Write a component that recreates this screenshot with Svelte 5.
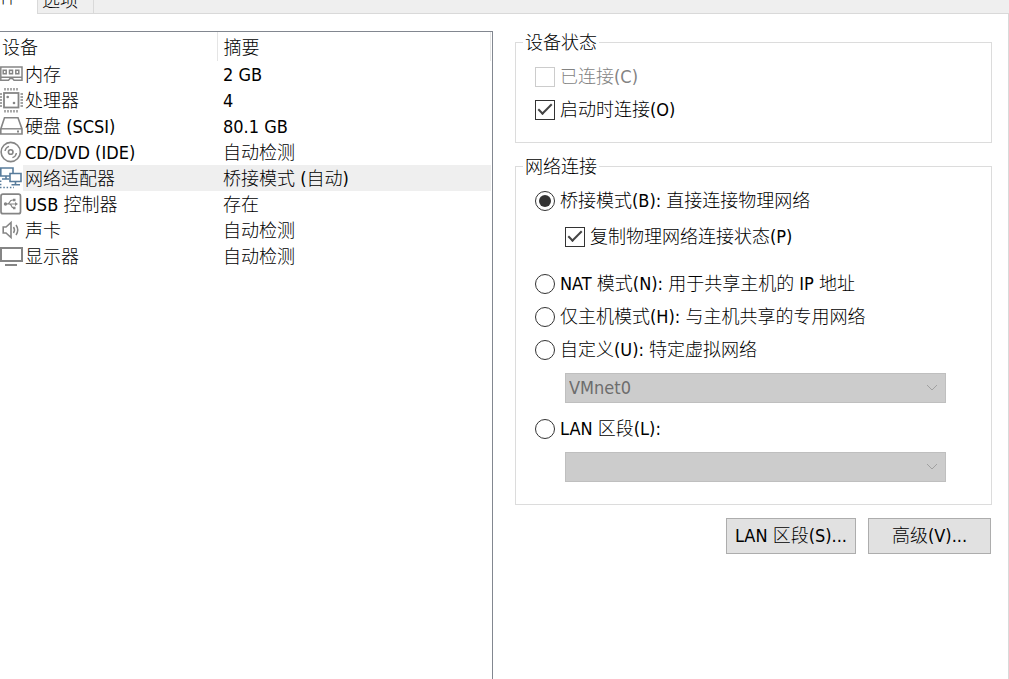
<script>
  let devices = [
    { icon: 'memory', name: '内存', summary: '2 GB' },
    { icon: 'cpu', name: '处理器', summary: '4' },
    { icon: 'disk', name: '硬盘 (SCSI)', summary: '80.1 GB' },
    { icon: 'cd', name: 'CD/DVD (IDE)', summary: '自动检测' },
    { icon: 'network', name: '网络适配器', summary: '桥接模式 (自动)' },
    { icon: 'usb', name: 'USB 控制器', summary: '存在' },
    { icon: 'sound', name: '声卡', summary: '自动检测' },
    { icon: 'display', name: '显示器', summary: '自动检测' }
  ];

  let selected = 'network';
  let connected = false;
  let connectAtPowerOn = true;
  let mode = 'bridged';
  let replicate = true;
</script>

<div class="dialog">
  <nav class="tabs">
    <button class="tab active">硬件</button>
    <button class="tab">选项</button>
  </nav>

  <main>
    <section class="device-list">
      <table>
        <colgroup>
          <col class="col-icon" />
          <col class="col-name" />
          <col />
        </colgroup>
        <thead>
          <tr>
            <th class="name" colspan="2">设备</th>
            <th>摘要</th>
          </tr>
        </thead>
        <tbody>
          {#each devices as device}
            <tr class:selected={device.icon === selected} on:click={() => (selected = device.icon)}>
              <td class="icon">
                <svg width="23" height="26" viewBox="0 0 23 26" fill="none" stroke="#858585" stroke-width="2">
                  {#if device.icon === 'memory'}
                    <path d="M0.8 6H22V19.2H14L12.5 17.5H10L8.5 19.2H0.8ZM1 16.3H22" stroke-width="1.5" />
                    <path d="M3.2 9.3H6.2V12.8H3.2ZM9.5 9.3H12.5V12.8H9.5ZM15.8 9.3H18.8V12.8H15.8Z" stroke-width="1.5" />
                  {:else if device.icon === 'cpu'}
                    <rect x="4" y="6" width="14.5" height="14.5" stroke-width="1.8" />
                    <path d="M5 1V3.5M8 1V3.5M11 1V3.5M14 1V3.5M17 1V3.5M5 23V25.5M8 23V25.5M11 23V25.5M14 23V25.5M17 23V25.5" stroke-width="1.4" />
                    <path d="M0 7H2M0 10H2M0 13H2M0 16H2M0 19H2M20.5 7H23M20.5 10H23M20.5 13H23M20.5 16H23M20.5 19H23" stroke-width="1.4" />
                    <g fill="#858585" stroke="none">
                      <circle cx="7.7" cy="10" r="1.3" />
                      <circle cx="14" cy="16" r="1.3" />
                    </g>
                  {:else if device.icon === 'disk'}
                    <path d="M4.5 4.8H18L22 16V21H0.8V16Z" stroke-width="1.6" />
                    <path d="M0.8 15.8H22" stroke-width="1.4" />
                    <path d="M17 18.5H19" />
                  {:else if device.icon === 'cd'}
                    <circle cx="10.7" cy="13" r="9.6" stroke-width="1.6" />
                    <circle cx="10.7" cy="13" r="2.3" stroke-width="1.6" />
                    <path d="M5 12Q5.6 8.3 9 7.3M16.4 14Q15.8 17.7 12.4 18.7" stroke-width="1.4" />
                  {:else if device.icon === 'network'}
                    <g stroke="#587c9c" stroke-width="1.6">
                      <path d="M0.8 3H13V11H0.8ZM6 11V14M2 14H9" />
                      <path d="M10 8.5H21V16.5H10Z" fill="#fff" />
                      <path d="M15.5 16.5V19.5M11.5 19.7H20" />
                      <path d="M0 22.5H14" stroke-width="1.4" stroke-dasharray="1.5 1.8" />
                      <path d="M0.7 15.5V22" stroke-width="1.4" stroke-dasharray="1.5 1.8" />
                    </g>
                  {:else if device.icon === 'usb'}
                    <rect x="1" y="3.2" width="19.5" height="19.5" rx="2" stroke-width="1.7" />
                    <path d="M5 13H16M7 13Q9 13 9.7 11Q10.3 9 13 9M9 13Q11 13 11.5 15Q12 17 14 17" stroke-width="1.2" />
                    <circle cx="5.5" cy="13" r="1.7" fill="#858585" stroke="none" />
                    <path d="M13 7.8H15.5V10.2H13ZM13 15.8H15.5V18.2H13ZM15 11L18 13L15 15Z" fill="#858585" stroke="none" />
                  {:else if device.icon === 'sound'}
                    <path d="M3.2 10H6L11 5.5V20.5L6 16H3.2Z" stroke-width="1.6" />
                    <path d="M13.5 10Q15.5 13 13.5 16M16 8Q19.5 13 16 18" stroke-width="1.5" />
                  {:else}
                    <rect x="1" y="5" width="21" height="13" />
                    <path d="M5 22H17" />
                  {/if}
                </svg>
              </td>
              <td>{device.name}</td>
              <td class="summary">{device.summary}</td>
            </tr>
          {/each}
        </tbody>
      </table>
    </section>

    <section class="settings">
      <fieldset class="status">
        <legend>设备状态</legend>
        <label class="disabled">
          <input type="checkbox" bind:checked={connected} disabled />已连接(C)
        </label>
        <label>
          <input type="checkbox" bind:checked={connectAtPowerOn} />启动时连接(O)
        </label>
      </fieldset>

      <fieldset class="connection">
        <legend>网络连接</legend>
        <label>
          <input type="radio" name="mode" value="bridged" bind:group={mode} />桥接模式(B): 直接连接物理网络
        </label>
        <label class="nested">
          <input type="checkbox" bind:checked={replicate} />复制物理网络连接状态(P)
        </label>
        <label>
          <input type="radio" name="mode" value="nat" bind:group={mode} />NAT 模式(N): 用于共享主机的 IP 地址
        </label>
        <label>
          <input type="radio" name="mode" value="hostonly" bind:group={mode} />仅主机模式(H): 与主机共享的专用网络
        </label>
        <label>
          <input type="radio" name="mode" value="custom" bind:group={mode} />自定义(U): 特定虚拟网络
        </label>
        <div class="dropdown">
          <select aria-label="特定虚拟网络" disabled={mode !== 'custom'}>
            <option>VMnet0</option>
          </select>
          <svg width="12" height="8" viewBox="0 0 12 8"><path d="M1 1L6 6L11 1" /></svg>
        </div>
        <label>
          <input type="radio" name="mode" value="lan" bind:group={mode} />LAN 区段(L):
        </label>
        <div class="dropdown">
          <select aria-label="LAN 区段" disabled={mode !== 'lan'}>
            <option></option>
          </select>
          <svg width="12" height="8" viewBox="0 0 12 8"><path d="M1 1L6 6L11 1" /></svg>
        </div>
      </fieldset>

      <div class="buttons">
        <button>LAN 区段(S)...</button>
        <button>高级(V)...</button>
      </div>
    </section>
  </main>
</div>

<style>
  .dialog {
    display: flex;
    flex-direction: column;
    min-height: 100vh;
    box-sizing: border-box;
    overflow: hidden;
    background: #fff;
    color: #000;
    font-family: "DejaVu Sans Condensed", "Noto Sans CJK SC Light", "Noto Sans CJK SC", sans-serif;
    font-size: 18px;
    font-weight: 300;
    line-height: 22px;
  }

  button,
  select {
    font: inherit;
    color: inherit;
    border-radius: 0;
  }

  .tabs {
    display: flex;
    height: 13px;
    align-items: flex-end;
    margin-left: -24px;
    background: #efefef;
    border-bottom: 1px solid #d9d9d9;
  }

  .tab {
    flex: none;
    height: 24px;
    padding: 0 15px 0 4px;
    border: 0;
    border-right: 1px solid #d9d9d9;
    background: #efefef;
  }

  .tab.active {
    width: 62px;
    height: 28px;
    margin-bottom: -1px;
    padding: 0 18px 6px 4px;
    background: #fff;
  }

  main {
    flex: 1;
    display: grid;
    grid-template-columns: 493fr 516fr;
  }

  .device-list {
    margin-top: 17px;
    border-top: 1px solid #828790;
    border-right: 1px solid #828790;
    padding-right: 1px;
  }

  table {
    width: 100%;
    border-collapse: collapse;
    table-layout: fixed;
  }

  .col-icon {
    width: 23px;
  }

  .col-name {
    width: 194px;
  }

  th {
    height: 29px;
    padding: 2px 0 0 6px;
    box-sizing: border-box;
    text-align: left;
    font-weight: inherit;
    border-right: 1px solid #e5e5e5;
  }

  th.name {
    padding-left: 2px;
  }

  td {
    height: 26px;
    padding: 2px 0 0 2px;
    box-sizing: border-box;
    white-space: nowrap;
  }

  td.icon {
    padding: 0;
    background: #fff;
  }

  td.icon svg {
    display: block;
  }

  td.summary {
    padding-left: 6px;
  }

  .selected {
    background: #efefef;
  }

  .settings {
    padding: 17px 16px 0 22px;
    border-right: 1px solid #d9d9d9;
  }

  fieldset {
    margin: 0;
    padding: 7px 45px 16px 19px;
    border: 1px solid #dcdcdc;
    min-width: 0;
  }

  legend {
    margin-left: -12px;
    padding: 2px 2px 0;
    line-height: 20px;
  }

  .connection {
    margin-top: 12px;
    padding-bottom: 22px;
  }

  label {
    display: flex;
    align-items: center;
    gap: 5px;
    height: 33px;
    white-space: nowrap;
  }

  .disabled {
    color: #838383;
  }

  .nested {
    margin: 3px 0 14px 30px;
  }

  input {
    appearance: none;
    display: grid;
    place-items: center;
    flex: none;
    width: 20px;
    height: 20px;
    margin: 0;
    border: 1px solid #333;
    background: #fff;
  }

  input:disabled {
    border-color: #ccc;
  }

  input[type="radio"] {
    border-radius: 50%;
  }

  input[type="radio"]:checked::before {
    content: "";
    width: 12px;
    height: 12px;
    border-radius: 50%;
    background: #333;
  }

  input[type="checkbox"]:checked::before {
    content: "";
    width: 14px;
    height: 7px;
    margin-bottom: 4px;
    border: solid #444;
    border-width: 0 0 2px 2px;
    box-sizing: border-box;
    transform: rotate(-45deg);
  }

  .dropdown {
    position: relative;
    margin: 7px 0 9px 30px;
  }

  .dropdown:last-child {
    margin-bottom: 0;
  }

  select {
    appearance: none;
    display: block;
    width: 100%;
    height: 30px;
    padding: 0 3px;
    border: 1px solid #bfbfbf;
    background: #ccc;
    color: #6d6d6d;
    opacity: 1;
  }

  .dropdown svg {
    position: absolute;
    right: 8px;
    top: 11px;
    fill: none;
    stroke: #a0a0a0;
    pointer-events: none;
  }

  .buttons {
    display: flex;
    justify-content: flex-end;
    gap: 12px;
    margin-top: 13px;
    padding-right: 1px;
  }

  .buttons button {
    height: 36px;
    min-width: 123px;
    padding: 0 8px;
    border: 1px solid #adadad;
    background: #e1e1e1;
  }
</style>
